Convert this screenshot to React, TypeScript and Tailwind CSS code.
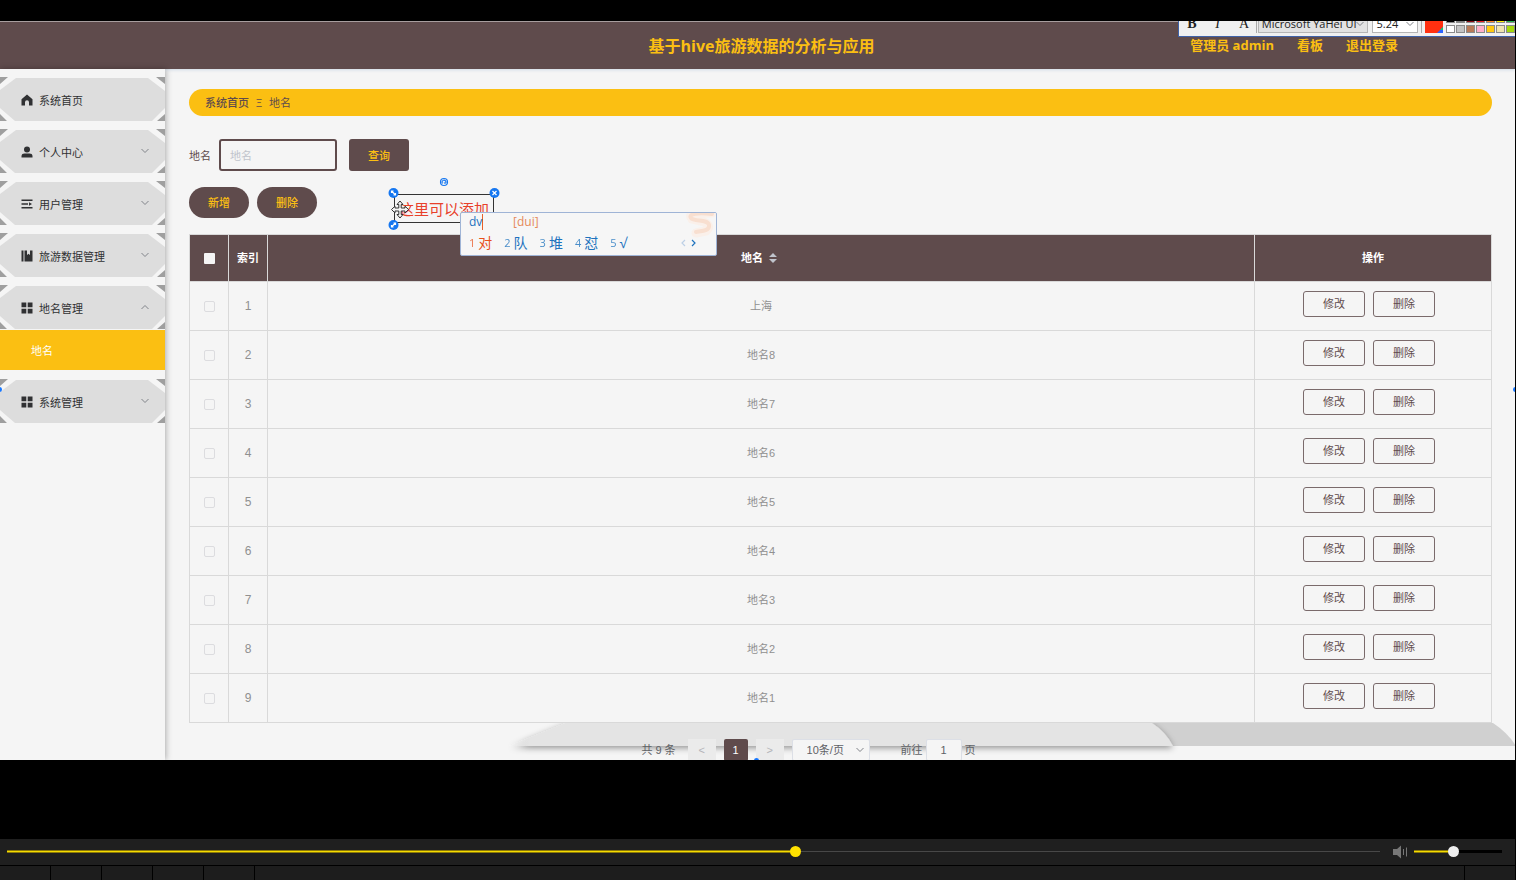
import { useState } from "react";
import type { ReactNode } from "react";

const ICONS: Record<string, ReactNode> = {
  home: <path d="M6 .5 11.5 5.3V11.5H8V8.2A2 2 0 0 0 4 8.2V11.5H.5V5.3Z" />,
  user: (
    <>
      <circle cx="6" cy="3.5" r="3" />
      <path d="M.5 11.5V10C.5 8.3 1.8 7.5 3.5 7.5H8.5C10.2 7.5 11.5 8.3 11.5 10V11.5Z" />
    </>
  ),
  list: <path d="M.5 1.5H11.5V3H.5ZM.5 5.3H7V6.8H.5ZM8 4.2 11 6 8 7.8ZM.5 9H11.5V10.5H.5Z" />,
  book: <path d="M.5 .5H2.5V11.5H.5ZM3.5 .5H6V5L7.5 3.8 9 5V.5H11.5V11.5H3.5Z" />,
  grid: <path d="M.5 .5H5.3V5.3H.5ZM6.7 .5H11.5V5.3H6.7ZM.5 6.7H5.3V11.5H.5ZM6.7 6.7H11.5V11.5H6.7Z" />,
};

const MENU = [
  { t: "系统首页", icon: "home", arrow: "" },
  { t: "个人中心", icon: "user", arrow: "down" },
  { t: "用户管理", icon: "list", arrow: "down" },
  { t: "旅游数据管理", icon: "book", arrow: "down" },
  { t: "地名管理", icon: "grid", arrow: "up", sub: "地名" },
  { t: "系统管理", icon: "grid", arrow: "down" },
];

const ROWS = ["上海", "地名8", "地名7", "地名6", "地名5", "地名4", "地名3", "地名2", "地名1"];

const CANDIDATES = ["对", "队", "堆", "怼", "√"];

const SWATCHES = [
  ["bg-black", "bg-[#7f7f7f]", "bg-[#8b0a15]", "bg-[#ed1c24]", "bg-[#ff7f27]", "bg-[#fff200]", "bg-[#22b14c]"],
  ["bg-white", "bg-[#c3c3c3]", "bg-[#b97a57]", "bg-[#ffaec9]", "bg-[#ffc90e]", "bg-[#efe4b0]", "bg-[#a5d80a]"],
];

function Chevron({ dir }: { dir: string }) {
  return (
    <svg viewBox="0 0 8 8" className="h-2 w-2 shrink-0" fill="none" stroke="#808389" strokeWidth="1">
      <path d={dir === "up" ? "M.5 6 4 2.5 7.5 6" : "M.5 2 4 5.5 7.5 2"} />
    </svg>
  );
}

function Sidebar() {
  return (
    <nav className="relative z-10 w-[165px] shrink-0 bg-[#f5f5f5] pt-2 shadow-[1px_0_6px_rgba(0,0,0,0.3)]">
      <ul className="flex flex-col gap-2">
        {MENU.map((m) => (
          <li key={m.t}>
            <button className="relative flex h-11 w-full items-center pt-[2px] pr-4 pl-[21px] text-[11px] text-[#303133]">
              <svg viewBox="0 0 165 44" preserveAspectRatio="none" className="absolute inset-0 h-full w-full">
                <path d="M16 1H148L165 14V31L152 44H15L0 31V13Z" fill="#ddd" />
                <path d="M0 0H8L0 7ZM165 0H156L165 7ZM0 44H7L0 37ZM165 44H157L165 37Z" fill="#9f9f9f" />
              </svg>
              <svg viewBox="0 0 12 12" className="relative h-3 w-3 shrink-0" fill="#303133">
                {ICONS[m.icon]}
              </svg>
              <span className="relative ml-[6px] flex-1 text-left">{m.t}</span>
              {m.arrow && (
                <span className="relative pb-[3px]">
                  <Chevron dir={m.arrow} />
                </span>
              )}
            </button>
            {m.sub && (
              <a href="#place" className="mt-px mb-px flex h-10 items-center bg-[#fbbf12] pl-[31px] text-[11px] text-white">
                {m.sub}
              </a>
            )}
          </li>
        ))}
      </ul>
    </nav>
  );
}

function DataTable() {
  return (
    <table className="w-full table-fixed border-collapse border border-[#d9d9d9] font-['Liberation_Sans','Noto_Sans_CJK_SC',sans-serif] text-[11px]">
      <colgroup>
        <col className="w-[39px]" />
        <col className="w-[39px]" />
        <col />
        <col className="w-[237px]" />
      </colgroup>
      <thead>
        <tr className="h-[47px] bg-[#5f4b4c] text-white">
          <th className="border border-[#d9d9d9]">
            <input
              type="checkbox"
              aria-label="全选"
              className="mx-auto block h-[11px] w-[11px] appearance-none rounded-[1px] bg-[#f5f5f5]"
            />
          </th>
          <th className="border border-[#d9d9d9] font-bold">索引</th>
          <th className="border border-[#d9d9d9] font-bold">
            <span className="inline-flex items-center gap-[6px] pr-1">
              地名
              <svg viewBox="0 0 8 10" className="h-[10px] w-2" fill="#c0c4cc">
                <path d="M4 0 8 4H0ZM4 10 0 6H8Z" />
              </svg>
            </span>
          </th>
          <th className="border border-[#d9d9d9] font-bold">操作</th>
        </tr>
      </thead>
      <tbody>
        {ROWS.map((name, i) => (
          <tr key={name} className="h-[49px] text-center text-[#909090]">
            <td className="border border-[#d9d9d9]">
              <input
                type="checkbox"
                aria-label={name}
                className="mx-auto block h-[11px] w-[11px] appearance-none rounded-xs border border-[#dcdcdf]"
              />
            </td>
            <td className="border border-[#d9d9d9] text-xs">{i + 1}</td>
            <td className="border border-[#d9d9d9] pt-px">{name}</td>
            <td className="border border-[#d9d9d9] pb-1">
              <div className="flex justify-center text-[#5f4b4c]">
                <button className="mr-2 h-[26px] w-[62px] rounded-[3px] border border-[#7a6a6b]">修改</button>
                <button className="mr-2 h-[26px] w-[62px] rounded-[3px] border border-[#7a6a6b]">删除</button>
              </div>
            </td>
          </tr>
        ))}
      </tbody>
    </table>
  );
}

function Pagination() {
  return (
    <div className="relative pt-4 font-['Liberation_Sans','Noto_Sans_CJK_SC',sans-serif]">
      <svg viewBox="0 0 1004 38" className="absolute top-0 -right-6 h-[38px] w-[1004px] overflow-visible">
        <defs>
          <filter id="soft" x="-5%" y="-50%" width="110%" height="250%">
            <feDropShadow dx="0" dy="2" stdDeviation="3" floodColor="#000" floodOpacity="0.4" />
          </filter>
          <linearGradient id="tip" x1="0" x2="1">
            <stop offset="0" stopColor="#e4e4e4" stopOpacity="0" />
            <stop offset="0.03" stopColor="#e4e4e4" />
          </linearGradient>
          <clipPath id="below">
            <path d="M-20 0H1004V60H-20Z" />
          </clipPath>
        </defs>
        <path d="M630 0H981Q996 10 1004 23H630Z" fill="#d0d0d0" />
        <g clipPath="url(#below)">
          <path d="M-3 23 54 0H640Q654 9 661 23Z" fill="url(#tip)" filter="url(#soft)" />
        </g>
      </svg>
      <div className="relative flex items-center justify-center pr-16 text-[11px] leading-4 text-[#606266]">
        <span className="mr-3">共 9 条</span>
        <button className="h-[22px] w-7 bg-[#ebebeb] text-[#b4b4b9]">&lt;</button>
        <button className="mx-2 h-[22px] w-6 rounded-xs bg-[#5f4b4c] text-white">1</button>
        <button className="h-[22px] w-7 bg-[#ebebeb] text-[#b4b4b9]">&gt;</button>
        <div className="relative mr-[31px] ml-2">
          <select aria-label="每页条数" className="h-[22px] w-[78px] appearance-none rounded-xs border border-[#dcdfe6] bg-[#f5f5f5] pl-[14px]">
            <option>10条/页</option>
          </select>
          <span className="pointer-events-none absolute top-[7px] right-[6px]">
            <Chevron dir="down" />
          </span>
        </div>
        <label className="flex items-center gap-[3px]">
          前往
          <input defaultValue="1" className="h-[22px] w-9 rounded-xs border border-[#dcdfe6] bg-[#f5f5f5] text-center" />
          页
        </label>
      </div>
    </div>
  );
}

// floating text tool, clipped by the top of the recording
function TextToolbar() {
  return (
    <div className="absolute top-0 right-0 flex h-4 w-[337px] items-end overflow-hidden border-b border-l border-[#3f62a8] bg-[#f0f0f0] pb-[3px] pl-2 text-[11px] text-[#222]">
      <button className="h-[18px] w-[10px] font-['Liberation_Serif'] text-sm leading-[18px] font-bold">B</button>
      <button className="ml-4 h-[18px] w-[10px] font-['Liberation_Serif'] text-sm leading-[18px] italic">I</button>
      <button className="ml-4 h-[18px] w-3 font-['Liberation_Serif'] text-sm leading-[18px]">A</button>
      <span className="mr-px ml-[6px] h-[18px] w-px bg-[#aaa]" />
      <button className="flex h-[18px] w-[111px] items-center justify-between border border-[#b5b5b5] bg-[#e2e2e2] px-[3px] font-['Open_Sans'] whitespace-nowrap">
        Microsoft YaHei UI
        <Chevron dir="down" />
      </button>
      <button className="ml-1 flex h-[18px] w-[47px] items-center justify-between border border-[#b5b5b5] bg-white px-[3px] font-['Open_Sans']">
        5.24
        <Chevron dir="down" />
      </button>
      <span className="mx-[3px] h-[18px] w-px bg-[#aaa]" />
      <svg viewBox="0 0 18 18" className="h-[18px] w-[18px] shrink-0">
        <path d="M0 0H18V18H0Z" fill="#ff3010" />
        <path d="M18 12V18H12Z" fill="#2b62ff" />
        <path d="M18 12V15H15Z" fill="#15c96a" />
      </svg>
      <div className="ml-[3px] flex shrink-0 flex-col gap-[2px]">
        {SWATCHES.map((row, r) => (
          <div key={r} className="flex gap-px">
            {row.map((c) => (
              <span key={c} className={`h-2 w-[9px] border border-[#8a8a8a] ${c}`} />
            ))}
          </div>
        ))}
      </div>
    </div>
  );
}

function Annotation() {
  return (
    <div className="absolute top-[173px] left-[394px] h-[29px] w-[100px] border border-[#333]">
      <span className="block pl-1 text-[15px] leading-7 whitespace-nowrap text-[#e8402a]">这里可以添加</span>
      <svg viewBox="0 0 120 60" className="absolute -top-5 -left-2 h-[60px] w-[120px]">
        <g fill="none" stroke="#1677f0" strokeWidth="1.2">
          <circle cx="57" cy="7" r="3.5" />
          <path d="M55.5 8.5A2 2 0 1 1 59 7.5Q58 9 57 7.5" />
        </g>
        <g fill="#1677f0">
          <circle cx="6.5" cy="18" r="5" />
          <circle cx="107.5" cy="18" r="5" />
          <circle cx="6.5" cy="50" r="5" />
        </g>
        <g stroke="#fff" strokeWidth="1.2" fill="none">
          <path d="M4.5 16 8.5 20M4.5 18V16H6.5M8.5 18V20H6.5" />
          <path d="M105.500 16 109.500 20M109.500 16 105.500 20" />
          <path d="M4.5 52 8.5 48M4.5 50V52H6.5M6.5 48H8.5V50" />
        </g>
        <path
          d="M13 26 16 29.5H14.2V33H18V31.2L21.5 34.5 18 38V36H14.2V39.5H16L13 43 10 39.5H11.8V36H8V38L4.5 34.5 8 31.2V33H11.8V29.5H10Z"
          fill="#f5f5f5"
          stroke="#333"
          strokeWidth="1"
        />
      </svg>
    </div>
  );
}

function ImePopup() {
  return (
    <div className="absolute top-[191px] left-[460px] h-[44px] w-[257px] overflow-hidden rounded-xs border border-[#9fb4d6] bg-[#f6f6f6] px-2 font-['Open_Sans','Noto_Sans_CJK_SC',sans-serif]">
      <svg viewBox="0 0 32 28" className="absolute top-0 right-0 h-7 w-8" fill="none" strokeLinecap="round">
        <path d="M28 0H12Q4 1 8 6L20 9Q28 13 22 18L12 20" stroke="#faf0ea" strokeWidth="9" />
        <path d="M28 1C14-1 4 1 7 5S24 6 25 12S18 18 12 19" stroke="#f8dfd0" strokeWidth="4" />
      </svg>
      <div className="flex h-[18px] items-center text-xs text-[#1e73be]">
        <span className="w-[14px] border-r border-[#e8602a] leading-4">dv</span>
        <span className="ml-[30px] text-[#e58a5a]">[dui]</span>
      </div>
      <div className="relative flex items-center gap-3 text-sm leading-6 text-[#1e73be]">
        {CANDIDATES.map((c, i) => (
          <span key={c} className={i === 0 ? "flex items-center gap-[3px] text-[#e8501a]" : "flex items-center gap-[3px]"}>
            <small className="text-[11px] opacity-80">{i + 1}</small>
            {c}
          </span>
        ))}
        <svg viewBox="0 0 18 10" className="absolute right-[10px] h-[10px] w-[18px]" fill="none" strokeWidth="1.2">
          <path d="M5 2 2 5 5 8" stroke="#bdd0e6" />
          <path d="M12 2 15 5 12 8" stroke="#1e73be" />
        </svg>
      </div>
    </div>
  );
}

function Player() {
  const [pos, setPos] = useState(575);
  const [vol, setVol] = useState(44);
  return (
    <footer className="shrink-0">
      <div className="flex h-[26px] items-center bg-[#1f1f1f] pr-[13px] pb-px pl-[7px]">
        <div className="relative flex h-[11px] flex-1 items-center">
          <div className="absolute inset-x-0 h-px bg-[#484848]" />
          <div
            className="absolute left-0 h-[3px] border-y border-[#8c7a08] bg-[#f5dc00]"
            style={{ width: `${pos / 10}%` }}
          />
          <input
            type="range"
            aria-label="播放进度"
            max={1000}
            value={pos}
            onChange={(e) => setPos(Number(e.target.value))}
            className="relative h-[11px] w-full appearance-none bg-transparent [&::-webkit-slider-thumb]:h-[11px] [&::-webkit-slider-thumb]:w-[11px] [&::-webkit-slider-thumb]:appearance-none [&::-webkit-slider-thumb]:rounded-full [&::-webkit-slider-thumb]:bg-[#ffe100]"
          />
        </div>
        <button aria-label="静音" className="mr-[6px] ml-3">
          <svg viewBox="0 0 16 14" className="h-[14px] w-4" fill="#777">
            <path d="M1 4H5L9 .5V13.5L5 10H1Z" />
            <path d="M11 4H12V10H11ZM14 2.5H15V11.5H14Z" />
          </svg>
        </button>
        <div className="relative flex h-[11px] w-[88px] items-center">
          <div className="absolute inset-x-0 h-[3px] bg-black" />
          <div
            className="absolute left-0 h-[3px] border-y border-[#8c7a08] bg-[#f5dc00]"
            style={{ width: `${vol}%` }}
          />
          <input
            type="range"
            aria-label="音量"
            value={vol}
            onChange={(e) => setVol(Number(e.target.value))}
            className="relative h-[11px] w-full appearance-none bg-transparent [&::-webkit-slider-thumb]:h-[11px] [&::-webkit-slider-thumb]:w-[11px] [&::-webkit-slider-thumb]:appearance-none [&::-webkit-slider-thumb]:rounded-full [&::-webkit-slider-thumb]:bg-[#eee]"
          />
        </div>
      </div>
      <div className="mt-px flex h-[14px] gap-px">
        {[1, 2, 3, 4, 5].map((n) => (
          <div key={n} className="w-[50px] bg-[#1d1d1d]" />
        ))}
        <div className="flex-1 bg-[#1d1d1d]" />
        <div className="w-[50px] bg-[#1d1d1d]" />
      </div>
    </footer>
  );
}

export default function App() {
  return (
    <div className="flex h-screen flex-col bg-black pt-[21px] pr-px font-['Noto_Sans_CJK_SC',sans-serif]">
      <div className="relative mb-[79px] flex min-h-0 flex-1 flex-col overflow-hidden bg-[#f5f5f5]">
        <header className="relative grid h-12 shrink-0 grid-cols-[1fr_auto_1fr] items-center border-t border-[#a79d9e] bg-[#5f4b4c] font-['Open_Sans','Noto_Sans_CJK_SC',sans-serif] font-bold text-[#fbbf12] shadow-[0_1px_3px_#cfdbe6]">
          <h1 className="col-start-2 pl-2 text-base">基于hive旅游数据的分析与应用</h1>
          <div className="flex justify-end gap-[23px] pr-[117px] text-[13px]">
            <span>管理员 admin</span>
            <a href="#board">看板</a>
            <a href="#logout">退出登录</a>
          </div>
        </header>

        <div className="flex min-h-0 flex-1">
          <Sidebar />
          <main className="min-w-0 flex-1 pt-5 pr-[23px] pl-6">
            <div className="flex h-[27px] items-center gap-[6px] rounded-full bg-[#fbbf12] px-4 text-[11px] text-[#5f4b4c]">
              <a href="#home" className="font-medium">
                系统首页
              </a>
              <span className="w-[8px] text-center">Ξ</span>
              <span>地名</span>
            </div>

            <form className="mt-[23px] flex items-center text-[11px]" onSubmit={(e) => e.preventDefault()}>
              <label htmlFor="name" className="mr-2 text-[#5f4b4c]">
                地名
              </label>
              <input
                id="name"
                placeholder="地名"
                className="mr-3 h-8 w-[118px] rounded-[3px] border-2 border-[#5f4b4c] px-[9px] placeholder:text-[#c0c4cc]"
              />
              <button className="h-8 w-[60px] rounded-[3px] bg-[#5f4b4c] font-medium text-[#fbbf12]">查询</button>
            </form>

            <div className="my-4 flex gap-2 text-[11px] font-medium text-[#fbbf12]">
              <button className="h-[31px] w-[60px] rounded-full bg-[#5f4b4c]">新增</button>
              <button className="h-[31px] w-[60px] rounded-full bg-[#5f4b4c]">删除</button>
            </div>

            <DataTable />
            <Pagination />
          </main>
        </div>

        <TextToolbar />
        <Annotation />
        <ImePopup />
        <span className="absolute top-[366px] -left-[3px] z-20 h-[5px] w-[5px] rounded-full bg-[#1677ff]" />
        <span className="absolute top-[366px] -right-[3px] h-[5px] w-[5px] rounded-full bg-[#1677ff]" />
        <span className="absolute -bottom-[3px] left-[754px] h-[5px] w-[5px] rounded-full bg-[#1677ff]" />
      </div>
      <Player />
    </div>
  );
}
